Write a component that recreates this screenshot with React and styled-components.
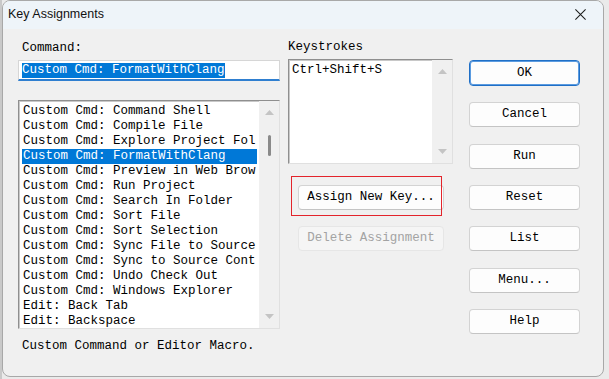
import React from 'react'
import styled, { createGlobalStyle, css } from 'styled-components'

const GlobalStyle = createGlobalStyle`
  html, body {
    margin: 0;
    padding: 0;
    background: #e4e4e4;
  }
  * { box-sizing: border-box; }
`

const MONO = `"Liberation Mono", "DejaVu Sans Mono", monospace`

// the list box only shows this much of each entry
const commands = [
  'Custom Cmd: Command Shell',
  'Custom Cmd: Compile File',
  'Custom Cmd: Explore Project Fol',
  'Custom Cmd: FormatWithClang',
  'Custom Cmd: Preview in Web Brow',
  'Custom Cmd: Run Project',
  'Custom Cmd: Search In Folder',
  'Custom Cmd: Sort File',
  'Custom Cmd: Sort Selection',
  'Custom Cmd: Sync File to Source',
  'Custom Cmd: Sync to Source Cont',
  'Custom Cmd: Undo Check Out',
  'Custom Cmd: Windows Explorer',
  'Edit: Back Tab',
  'Edit: Backspace',
]

const sideButtons = ['OK', 'Cancel', 'Run', 'Reset', 'List', 'Menu...', 'Help']

export default function App() {
  return (
    <>
      <GlobalStyle />
      <Desktop>
        <Dialog>
          <TitleBar>
            <Title>Key Assignments</Title>
            <CloseIcon viewBox="0 0 14 14">
              <path d="M1.5 1.5 L12.5 12.5 M12.5 1.5 L1.5 12.5" stroke="#1a1a1a" strokeWidth="1.1" fill="none" />
            </CloseIcon>
          </TitleBar>
          <Body>
            <LeftColumn>
              <Label $indent={4}>Command:</Label>
              <CommandInput>
                <Selected>Custom Cmd: FormatWithClang</Selected>
              </CommandInput>
              <ListBox $height={229}>
                <Rows>
                  {commands.map((c, i) => (
                    <Row key={c} $selected={i === 3}>{c}</Row>
                  ))}
                </Rows>
                <Scrollbar>
                  <Arrow viewBox="0 0 9 5"><polygon points="0,5 4.5,0 9,5" fill="#c4c4c4" /></Arrow>
                  <Track>
                    <Thumb />
                  </Track>
                  <Arrow viewBox="0 0 9 5"><polygon points="0,0 4.5,5 9,0" fill="#c4c4c4" /></Arrow>
                </Scrollbar>
              </ListBox>
              <Description>Custom Command or Editor Macro.</Description>
            </LeftColumn>

            <MiddleColumn>
              <Label $indent={0}>Keystrokes</Label>
              <ListBox $height={105}>
                <Rows $left={2}>
                  <Row>Ctrl+Shift+S</Row>
                </Rows>
                <Scrollbar>
                  <Arrow viewBox="0 0 9 5"><polygon points="0,5 4.5,0 9,5" fill="#c4c4c4" /></Arrow>
                  <Track />
                  <Arrow viewBox="0 0 9 5"><polygon points="0,0 4.5,5 9,0" fill="#c4c4c4" /></Arrow>
                </Scrollbar>
              </ListBox>
              <Marked>
                <Button $wide>Assign New Key...</Button>
              </Marked>
              <Button $wide $disabled>Delete Assignment</Button>
            </MiddleColumn>

            <RightColumn>
              {sideButtons.map((b) => (
                <Button key={b} $default={b === 'OK'}>{b}</Button>
              ))}
            </RightColumn>
          </Body>
        </Dialog>
      </Desktop>
    </>
  )
}

const Desktop = styled.div`
  width: 609px;
  height: 379px;
  display: flex;
  padding-left: 2px;
  overflow: hidden;
  background: linear-gradient(to right, #c9c9c9 0, #c9c9c9 2px, #eaeaea 2px);
`

const Dialog = styled.div`
  width: 602px;
  height: 377px;
  border: 1px solid #a8a8a8;
  border-radius: 8px;
  background: #f0f0f0;
  overflow: hidden;
  display: flex;
  flex-direction: column;
`

const TitleBar = styled.div`
  height: 28px;
  flex: none;
  display: flex;
  align-items: center;
  justify-content: space-between;
  padding: 0 16px 2px 5px;
  background: #eef4f9;
`

const Title = styled.span`
  font-family: "Liberation Sans", Arial, sans-serif;
  font-size: 12.5px;
  color: #111;
`

const CloseIcon = styled.svg`
  width: 13px;
  height: 13px;
`

const Body = styled.div`
  flex: 1;
  display: flex;
  padding-left: 15px;
  font-family: ${MONO};
  font-size: 12.5px;
  color: #000;
`

const LeftColumn = styled.div`
  width: 262px;
  padding-top: 12px;
  display: flex;
  flex-direction: column;
`

const MiddleColumn = styled.div`
  width: 165px;
  margin-left: 8px;
  padding-top: 11px;
  display: flex;
  flex-direction: column;
`

const RightColumn = styled.div`
  width: 111px;
  margin-left: 16px;
  padding-top: 31px;
  display: flex;
  flex-direction: column;
  gap: 16.33px;
`

const Label = styled.div`
  line-height: 15px;
  height: 15px;
  padding-left: ${(p) => p.$indent}px;
  margin-bottom: 4px;
`

const CommandInput = styled.div`
  height: 21px;
  background: #fff;
  border: 1px solid #d6d6d6;
  border-bottom: 2px solid #2f7fd0;
  padding: 2px 0 0 3px;
  line-height: 15px;
  white-space: nowrap;
  margin-bottom: 19px;
`

const Selected = styled.span`
  background: #0078d7;
  color: #fff;
  display: inline-block;
  height: 15px;
`

const ListBox = styled.div`
  height: ${(p) => p.$height}px;
  background: #fff;
  border: 1px solid;
  border-color: #8f8f8f #e0e0e0 #e0e0e0 #8f8f8f;
  box-shadow: inset 1px 1px 0 #c8c8c8;
  display: flex;
  overflow: hidden;
`

const Rows = styled.div`
  flex: 1;
  min-width: 0;
  padding: 3px 2px 0 ${(p) => (p.$left !== undefined ? p.$left : 3)}px;
  overflow: hidden;
`

const Row = styled.div`
  height: 15px;
  line-height: 15px;
  padding-left: 1px;
  white-space: nowrap;
  overflow: hidden;
  ${(p) => p.$selected && css`
    background: #0078d7;
    color: #fff;
  `}
`

const Scrollbar = styled.div`
  width: 20px;
  flex: none;
  background: #f0f0f0;
  display: flex;
  flex-direction: column;
  align-items: center;
  padding: 9px 0 9px;
`

const Arrow = styled.svg`
  width: 9px;
  height: 5px;
  flex: none;
`

const Track = styled.div`
  flex: 1;
  width: 100%;
  padding-top: 20px;
  display: flex;
  justify-content: center;
`

const Thumb = styled.div`
  width: 3px;
  height: 21px;
  border-radius: 2px;
  background: #8a8a8a;
  margin-left: 1px;
`

const Description = styled.div`
  margin-top: 10px;
  padding-left: 4px;
  line-height: 15px;
`

const Marked = styled.div`
  position: relative;
  margin-top: 21px;
  margin-bottom: 16px;

  &::after {
    content: '';
    position: absolute;
    left: 3px;
    top: -9px;
    width: 149px;
    height: 38px;
    border: 1px solid #e3242b;
    pointer-events: none;
  }
`

const Button = styled.div`
  height: 25px;
  width: ${(p) => (p.$wide ? '146px' : '111px')};
  margin-left: ${(p) => (p.$wide ? '10px' : '0')};
  display: flex;
  align-items: center;
  justify-content: center;
  background: #fdfdfd;
  border: 1px solid #d3d3d3;
  border-bottom-color: #c4c4c4;
  border-radius: 4px;
  line-height: 15px;
  white-space: nowrap;
  color: #000;
  ${(p) => p.$default && css`
    height: 26px;
    border: 1px solid #1f6fc6;
    box-shadow: inset 0 0 0 1px #5b9be0;
  `}
  ${(p) => p.$disabled && css`
    background: #f5f5f5;
    border-color: #e6e6e6;
    color: #a3a3a3;
  `}
`
